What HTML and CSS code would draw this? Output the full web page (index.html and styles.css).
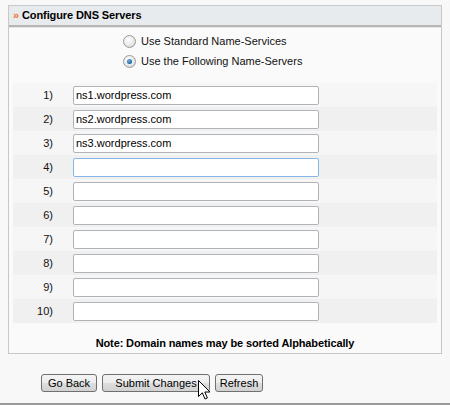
FILE: index.html
```html
<!DOCTYPE html>
<html>
<head>
<meta charset="utf-8">
<link rel="stylesheet" href="styles.css">
</head>
<body>
<div class="page">
  <div class="panel">
    <div class="panel-header"><span class="chev">»</span> Configure DNS Servers</div>
    <div class="options">
      <label class="opt"><span class="radio"></span>Use Standard Name-Services</label>
      <label class="opt"><span class="radio checked"></span>Use the Following Name-Servers</label>
    </div>
    <div class="rows">
      <div class="row"><span class="num">1)</span><input class="field" type="text" value="ns1.wordpress.com"></div>
      <div class="row alt"><span class="num">2)</span><input class="field" type="text" value="ns2.wordpress.com"></div>
      <div class="row"><span class="num">3)</span><input class="field" type="text" value="ns3.wordpress.com"></div>
      <div class="row alt"><span class="num">4)</span><input class="field focus" type="text" value=""></div>
      <div class="row"><span class="num">5)</span><input class="field" type="text" value=""></div>
      <div class="row alt"><span class="num">6)</span><input class="field" type="text" value=""></div>
      <div class="row"><span class="num">7)</span><input class="field" type="text" value=""></div>
      <div class="row alt"><span class="num">8)</span><input class="field" type="text" value=""></div>
      <div class="row"><span class="num">9)</span><input class="field" type="text" value=""></div>
      <div class="row alt"><span class="num">10)</span><input class="field" type="text" value=""></div>
    </div>
    <div class="note">Note: Domain names may be sorted Alphabetically</div>
  </div>
  <div class="buttons">
    <button class="btn btn-back">Go Back</button>
    <button class="btn btn-submit">Submit Changes</button>
    <button class="btn btn-refresh">Refresh</button>
    <svg class="cursor" width="13" height="21" viewBox="0 0 13 21"><path d="M0.5 0.5 L0.5 16.5 L4.3 12.8 L7 19 L9.4 18 L6.8 12 L12 12 Z" fill="#fff" stroke="#000" stroke-width="1" stroke-linejoin="round"/></svg>
  </div>
  <div class="bottom-line"></div>
</div>
</body>
</html>
```
FILE: styles.css
```css
html, body {
  margin: 0;
  padding: 0;
}
body {
  background: #f8f8f8;
  font-family: "Liberation Sans", Arial, sans-serif;
  font-size: 11px;
  color: #000;
}
.page {
  width: 450px;
  height: 405px;
  padding-top: 5px;
  box-sizing: border-box;
  display: flex;
  flex-direction: column;
}
.panel {
  margin: 0 8px;
  border: 1px solid #c8c8c8;
  background: #fafafa;
  height: 349px;
  box-sizing: border-box;
}
.panel-header {
  height: 19px;
  line-height: 19px;
  background: #e8ebee;
  border-bottom: 2px solid #b6b6b6;
  font-weight: bold;
  font-size: 11px;
  padding-left: 4px;
  letter-spacing: -0.1px;
  box-shadow: 0 1px 0 #e6e6e6;
}
.chev {
  color: #e8762a;
  font-weight: bold;
}
.options {
  display: flex;
  flex-direction: column;
  gap: 8px;
  padding: 8px 0 0 114px;
}
.opt {
  display: flex;
  align-items: center;
  gap: 5px;
  height: 12px;
  color: #111;
}
.radio {
  width: 11px;
  height: 11px;
  border-radius: 50%;
  border: 1px solid #9a9a9a;
  background: radial-gradient(circle at 40% 35%, #ffffff 0, #e8e8e8 55%, #cfcfcf 100%);
  box-sizing: content-box;
  position: relative;
}
.radio.checked::after {
  content: "";
  position: absolute;
  left: 3px;
  top: 3px;
  width: 5px;
  height: 5px;
  border-radius: 50%;
  background: radial-gradient(circle at 40% 35%, #6fb0e8 0, #1e5f9e 70%, #13436f 100%);
}
.rows {
  margin: 16px 4px 0 4px;
  display: flex;
  flex-direction: column;
}
.row {
  display: flex;
  align-items: center;
  height: 24px;
  background: #f6f6f6;
}
.row.alt {
  background: #f0f0f0;
}
.num {
  width: 40px;
  text-align: right;
  color: #111;
}
.field {
  margin-left: 20px;
  width: 246px;
  height: 19px;
  box-sizing: border-box;
  border: 1px solid #b0b3b8;
  border-radius: 2px;
  background: #fff;
  padding: 0 0 0 2px;
  font-family: "Liberation Sans", Arial, sans-serif;
  font-size: 11px;
  color: #000;
  outline: none;
}
.field.focus {
  border-color: #86b6e6;
}
.note {
  text-align: center;
  font-weight: bold;
  margin-top: 14px;
  letter-spacing: -0.12px;
}
.buttons {
  position: relative;
  display: flex;
  gap: 5px;
  margin: 20px 0 0 41px;
}
.btn {
  height: 18px;
  padding: 0;
  border: 1px solid #707070;
  border-radius: 3px;
  background: linear-gradient(#f4f4f4, #ececec 50%, #dedede 50%, #d2d2d2);
  font-family: "Liberation Sans", Arial, sans-serif;
  font-size: 11px;
  color: #000;
}
.btn-back { width: 56px; }
.btn-submit { width: 108px; }
.btn-refresh { width: 48px; }
.cursor {
  position: absolute;
  left: 157px;
  top: 6px;
}
.bottom-line {
  margin-top: auto;
  height: 2px;
  background: #9a9a9a;
}
```
